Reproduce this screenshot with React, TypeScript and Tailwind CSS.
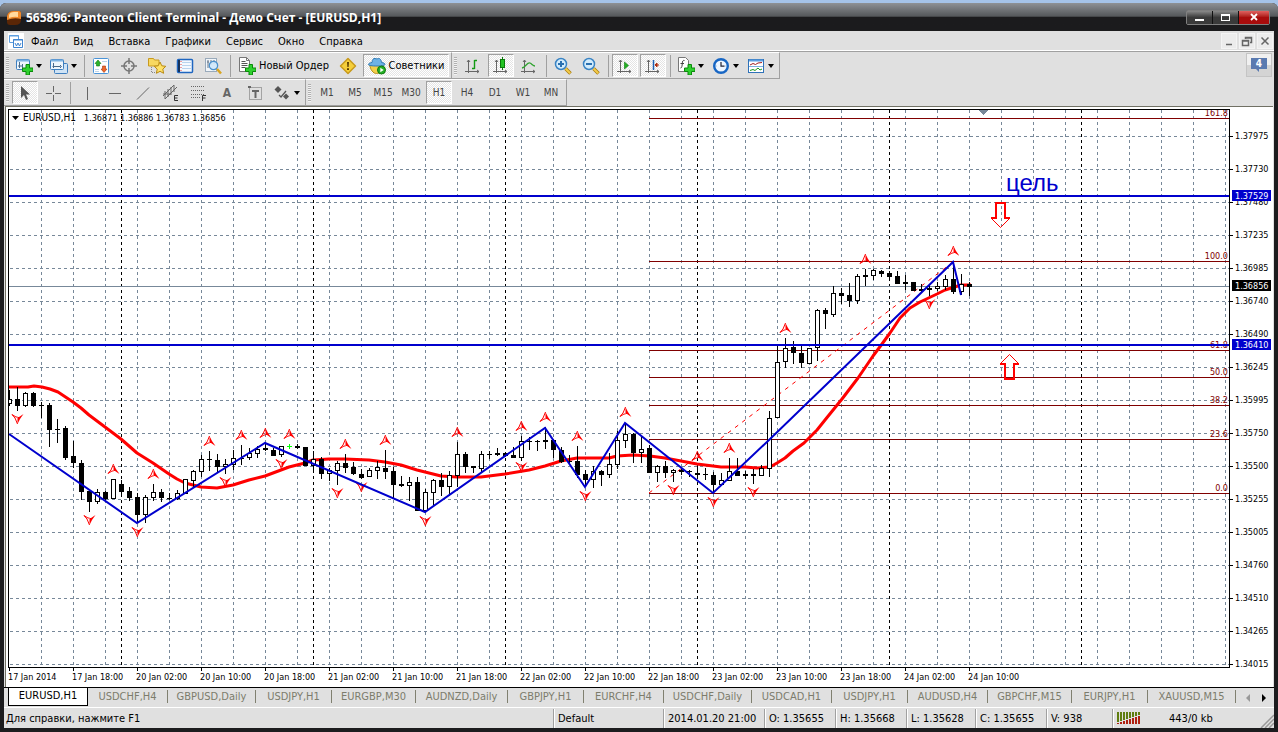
import type { ReactNode } from 'react';
import clsx from 'clsx';

const MENU = ['Файл', 'Вид', 'Вставка', 'Графики', 'Сервис', 'Окно', 'Справка'];
const TIMEFRAMES = ['M1', 'M5', 'M15', 'M30', 'H1', 'H4', 'D1', 'W1', 'MN'];

const TABS = [
  { label: 'EURUSD,H1', width: 'w-20' },
  { label: 'USDCHF,H4', width: 'w-20' },
  { label: 'GBPUSD,Daily', width: 'w-22' },
  { label: 'USDJPY,H1', width: 'w-19' },
  { label: 'EURGBP,M30', width: 'w-21' },
  { label: 'AUDNZD,Daily', width: 'w-23' },
  { label: 'GBPJPY,H1', width: 'w-19' },
  { label: 'EURCHF,H4', width: 'w-20' },
  { label: 'USDCHF,Daily', width: 'w-22' },
  { label: 'USDCAD,H1', width: 'w-20' },
  { label: 'USDJPY,H1', width: 'w-19' },
  { label: 'AUDUSD,H4', width: 'w-20' },
  { label: 'GBPCHF,M15', width: 'w-21' },
  { label: 'EURJPY,H1', width: 'w-19' },
  { label: 'XAUUSD,M15', width: 'w-22' },
];

const STATUS = [
  { text: 'Default', width: 'w-[110px]' },
  { text: '2014.01.20 21:00', width: 'w-[101px]' },
  { text: 'O: 1.35655', width: 'w-[71px]' },
  { text: 'H: 1.35668', width: 'w-[71px]' },
  { text: 'L: 1.35628', width: 'w-[69px]' },
  { text: 'C: 1.35655', width: 'w-[71px]' },
  { text: 'V: 938', width: 'w-[66px]' },
];

// chart geometry
const LEFT = 8;
const RIGHT = 1229;
const TOP = 109;
const BOTTOM = 667;

const PRICES = [
  '1.37975', '1.37730', '1.37480', '1.37235', '1.36985', '1.36740', '1.36490', '1.36245', '1.35995',
  '1.35750', '1.35500', '1.35255', '1.35005', '1.34760', '1.34510', '1.34265', '1.34015',
];

const TIMES = [
  '17 Jan 2014', '17 Jan 18:00', '20 Jan 02:00', '20 Jan 10:00', '20 Jan 18:00', '21 Jan 02:00',
  '21 Jan 10:00', '21 Jan 18:00', '22 Jan 02:00', '22 Jan 10:00', '22 Jan 18:00', '23 Jan 02:00',
  '23 Jan 10:00', '23 Jan 18:00', '24 Jan 02:00', '24 Jan 10:00',
];

const DAY_BREAKS = [121, 313, 505, 697, 889, 1081];

const FIBO: [string, number][] = [
  ['161.8', 118], ['100.0', 261], ['61.8', 350], ['50.0', 377], ['38.2', 405], ['23.6', 439], ['0.0', 493],
];

// [body top, body bottom, wick top, wick bottom, kind], 8px apart
// b = bear, w = bull, d = doji, g = flat bar
type Kind = 'b' | 'w' | 'd' | 'g';
const CANDLES: [number, number, number, number, Kind][] = [
  [399, 404, 390, 406, 'w'], [399, 406, 387, 411, 'b'], [393, 406, 392, 407, 'w'], [393, 406, 392, 407, 'b'],
  [405, 406, 402, 418, 'd'], [405, 430, 403, 447, 'b'], [429, 430, 419, 443, 'd'], [428, 458, 426, 460, 'b'],
  [456, 463, 441, 468, 'b'], [463, 492, 460, 500, 'b'], [491, 502, 491, 512, 'b'], [492, 502, 489, 504, 'w'],
  [492, 499, 491, 501, 'b'], [479, 499, 479, 499, 'w'], [484, 492, 480, 497, 'b'], [491, 498, 487, 501, 'b'],
  [497, 515, 493, 523, 'b'], [497, 515, 495, 523, 'w'], [492, 498, 484, 501, 'w'], [492, 498, 489, 502, 'b'],
  [498, 499, 493, 500, 'd'], [493, 499, 490, 500, 'w'], [479, 494, 479, 494, 'w'], [471, 481, 470, 487, 'w'],
  [459, 472, 455, 477, 'w'], [459, 460, 451, 471, 'd'], [460, 467, 454, 473, 'b'], [464, 467, 459, 474, 'w'],
  [458, 465, 450, 470, 'w'], [458, 459, 445, 465, 'd'], [453, 458, 448, 460, 'w'], [449, 454, 446, 458, 'w'],
  [448, 450, 443, 451, 'd'], [450, 456, 448, 456, 'b'], [446, 455, 446, 457, 'w'], [446, 447, 444, 450, 'g'],
  [446, 448, 444, 449, 'd'], [447, 466, 447, 466, 'b'], [459, 466, 451, 470, 'w'], [459, 474, 457, 479, 'b'],
  [470, 474, 468, 481, 'w'], [463, 471, 461, 485, 'w'], [463, 468, 454, 473, 'b'], [467, 474, 462, 475, 'b'],
  [474, 478, 469, 479, 'b'], [470, 477, 468, 477, 'w'], [467, 471, 461, 479, 'w'], [468, 472, 450, 479, 'b'],
  [471, 485, 467, 499, 'b'], [484, 486, 476, 487, 'd'], [482, 486, 477, 501, 'w'], [482, 511, 477, 511, 'b'],
  [492, 511, 489, 512, 'w'], [480, 493, 479, 505, 'w'], [480, 487, 473, 496, 'b'], [475, 487, 471, 496, 'w'],
  [454, 476, 442, 487, 'w'], [454, 467, 452, 473, 'b'], [466, 468, 466, 473, 'd'], [454, 469, 451, 473, 'w'],
  [454, 455, 451, 459, 'd'], [453, 455, 448, 456, 'd'], [453, 456, 452, 457, 'b'], [455, 458, 447, 458, 'b'],
  [441, 458, 436, 461, 'w'], [441, 442, 437, 450, 'd'], [441, 442, 440, 451, 'd'], [440, 442, 427, 449, 'd'],
  [440, 450, 439, 458, 'b'], [450, 462, 447, 463, 'b'], [461, 462, 455, 463, 'd'], [461, 475, 446, 478, 'b'],
  [474, 480, 470, 486, 'b'], [471, 480, 466, 488, 'w'], [471, 475, 470, 486, 'b'], [464, 475, 453, 478, 'w'],
  [440, 465, 431, 469, 'w'], [434, 441, 423, 448, 'w'], [434, 453, 433, 463, 'b'], [449, 453, 437, 463, 'w'],
  [448, 473, 445, 473, 'b'], [466, 473, 465, 482, 'w'], [466, 473, 461, 478, 'b'], [470, 473, 469, 482, 'w'],
  [470, 472, 467, 475, 'd'], [471, 472, 470, 477, 'd'], [473, 475, 466, 478, 'd'], [474, 475, 468, 480, 'd'],
  [475, 485, 472, 492, 'b'], [480, 485, 473, 485, 'w'], [471, 481, 458, 481, 'w'], [471, 476, 458, 476, 'b'],
  [474, 476, 471, 479, 'd'], [474, 476, 469, 484, 'd'], [468, 476, 465, 476, 'w'], [418, 469, 411, 477, 'w'],
  [362, 418, 345, 418, 'w'], [348, 362, 338, 368, 'w'], [347, 353, 341, 364, 'b'], [353, 363, 346, 368, 'b'],
  [348, 364, 348, 364, 'w'], [310, 348, 309, 361, 'w'], [310, 314, 308, 329, 'b'], [293, 315, 286, 317, 'w'],
  [293, 296, 288, 304, 'b'], [295, 301, 283, 307, 'b'], [276, 301, 274, 304, 'w'], [275, 277, 269, 286, 'd'],
  [270, 276, 269, 280, 'w'], [271, 274, 270, 277, 'b'], [273, 277, 271, 281, 'b'], [276, 284, 271, 284, 'b'],
  [282, 284, 275, 290, 'd'], [282, 291, 282, 291, 'b'], [289, 291, 284, 293, 'd'], [288, 290, 285, 296, 'd'],
  [286, 289, 282, 291, 'w'], [279, 287, 275, 290, 'w'], [279, 292, 262, 294, 'b'], [284, 292, 274, 295, 'w'],
  [284, 287, 282, 296, 'b'],
];

const FRACTALS_UP = [
  [113, 469], [153, 474], [209, 441], [241, 435], [265, 433], [289, 434], [345, 444], [385, 440], [457, 432],
  [521, 426], [545, 417], [577, 436], [625, 412], [697, 456], [729, 448], [785, 328], [865, 259], [953, 251],
];
const FRACTALS_DOWN = [
  [17, 419], [89, 520], [137, 532], [225, 482], [281, 464], [337, 493], [361, 487], [425, 521], [521, 467],
  [585, 496], [673, 490], [713, 502], [753, 492], [929, 304],
];

const ZIGZAG =
  '9,434 137,523 265,443 425,512 545,428 585,487 625,423 713,493 769,440 953,262 961,295';
const MOVING_AVERAGE =
  '9,387 28,387 34,386 42,387 50,389 58,392 73,402 81,408 89,415 105,427 121,439 137,453 153,463 169,474 177,479 185,483 193,485 201,487 217,488 233,485 249,480 265,476 281,470 289,467 305,463 313,460 329,459 345,459 369,460 385,462 401,465 417,470 433,474 441,476 457,477 481,477 505,474 529,470 545,466 561,461 577,458 609,458 617,456 633,455 650,456 665,458 681,461 697,464 721,467 745,467 757,468 770,467 777,463 785,458 793,451 804,443 817,430 825,420 842,399 858,378 873,356 882,344 890,333 900,318 910,308 920,302 937,294 945,290 961,285 971,285';

const range = (from: number, to: number, step: number) =>
  Array.from({ length: Math.floor((to - from) / step) + 1 }, (_, i) => from + i * step);

function Candle({ x, data }: { x: number; data: [number, number, number, number, Kind] }) {
  const [top, bottom, high, low, kind] = data;
  if (kind === 'g') return <path d={`M${x - 2} 446.5h5M${x + 0.5} 444v5`} stroke="#0f0" />;
  return (
    <g>
      <rect x={x} y={high} width="1" height={low - high} />
      {kind === 'w' ? (
        <rect x={x - 1.5} y={top + 0.5} width="4" height={bottom - top - 1} fill="#fff" stroke="#000" />
      ) : (
        <rect x={x - 2} y={top} width="5" height={bottom - top} />
      )}
    </g>
  );
}

function Fractal({ x, y, down }: { x: number; y: number; down?: boolean }) {
  return (
    <g transform={`translate(${x + 0.5} ${y}) scale(1 ${down ? -1 : 1})`}>
      <path d="M0-5 2.500 0 6 5 1.500 2 0 2Z" fill="red" />
      <path d="M0-5-2.500 1-5.500 4.500-1.500 2 0 2" fill="none" stroke="red" />
    </g>
  );
}

function PriceTag({ y, color, text }: { y: number; color: string; text: string }) {
  return (
    <g>
      <rect x="1232" y={y - 5} width="39" height="11" fill={color} />
      <text x="1235" y={y + 4} fill="#fff">{text}</text>
    </g>
  );
}

function Chart() {
  return (
    <svg
      viewBox="6 107 1267 579"
      preserveAspectRatio="xMinYMin meet"
      className="block h-full w-full text-[9px]"
      role="img"
      aria-label="EURUSD,H1"
    >
      <g shapeRendering="crispEdges">
        <g stroke="#778899" strokeDasharray="3 3">
          {range(41, 1225, 32).map((x) => (
            <path key={x} d={`M${x + 0.5} ${TOP + 1}V${BOTTOM}`} />
          ))}
          {range(136, 664, 33).map((y) => (
            <path key={y} d={`M${LEFT + 2} ${y + 0.5}H${RIGHT}`} />
          ))}
        </g>
        <g stroke="#000" strokeDasharray="3 3">
          {DAY_BREAKS.map((x) => (
            <path key={x} d={`M${x + 0.5} ${TOP + 1}V${BOTTOM}`} />
          ))}
        </g>
        <path d={`M${LEFT} 286.5H${RIGHT}`} stroke="#778899" />
        {FIBO.map(([level, y]) => (
          <path key={level} d={`M649 ${y + 0.5}H${RIGHT}`} stroke="#800000" />
        ))}
      </g>
      <path d="M649 493 953 262" stroke="red" strokeDasharray="4 5" />

      <g fill="#800000" textAnchor="end">
        {FIBO.map(([level, y]) => (
          <text key={level} x="1228" y={y - 2}>{level}</text>
        ))}
      </g>

      <polyline points={MOVING_AVERAGE} fill="none" stroke="red" strokeWidth="3" strokeLinejoin="round" />
      <g shapeRendering="crispEdges">
        {CANDLES.map((c, i) => (
          <Candle key={i} x={9 + i * 8} data={c} />
        ))}
      </g>
      {FRACTALS_UP.map(([x, y]) => (
        <Fractal key={`${x}-${y}`} x={x} y={y} />
      ))}
      {FRACTALS_DOWN.map(([x, y]) => (
        <Fractal key={`${x}-${y}`} x={x} y={y} down />
      ))}
      <polyline points={ZIGZAG} fill="none" stroke="#0000cd" strokeWidth="2" />

      <g shapeRendering="crispEdges">
        <path d={`M${LEFT} 196H${RIGHT}M${LEFT} 345H${RIGHT}`} stroke="#0000cd" strokeWidth="2" />
        <path d="M6 107h2v579h-2z" fill="#fff" />
        <path d={`M${LEFT + 0.5} ${BOTTOM}V${TOP + 0.5}H${RIGHT + 0.5}V${BOTTOM + 0.5}H${LEFT}`} fill="none" stroke="#000" />
        <path d={`M978 ${TOP + 1}h11l-5.5 5z`} fill="#778899" />
      </g>
      <g fill="none" stroke="red">
        <path d="M991 218h5v-15h9v15h5" strokeWidth="2" />
        <path d="m991 218 9.500 9.500 9.500-9.500" />
        <path d="M1000 364h5v15h9v-15h5" strokeWidth="2" />
        <path d="m1000 364 9.500-9.500 9.500 9.500" />
      </g>
      <text x="1006" y="191" fill="#0000cd" className="font-['Liberation_Sans',sans-serif] text-[24px]">
        цель
      </text>

      <path d="M12 116h7l-3.500 4z" />
      <text x="23" y="121" className="text-[10px]">EURUSD,H1</text>
      <text x="84" y="121">1.36871 1.36886 1.36783 1.36856</text>

      {PRICES.map((p, i) => (
        <g key={p}>
          <path d={`M${RIGHT + 1} ${136.5 + i * 33}h3`} stroke="#000" />
          <text x="1235" y={139 + i * 33}>{p}</text>
        </g>
      ))}
      <PriceTag y={195} color="#0000cd" text="1.37529" />
      <PriceTag y={285} color="#000" text="1.36856" />
      <PriceTag y={344} color="#0000cd" text="1.36410" />

      {TIMES.map((t, i) => (
        <g key={t}>
          <path d={`M${9.5 + i * 64} ${BOTTOM + 1}v3`} stroke="#000" />
          <text x={8 + i * 64} y="680">{t}</text>
        </g>
      ))}
    </svg>
  );
}

function Icon({ children, size = 18 }: { children: ReactNode; size?: number }) {
  return (
    <svg width={size} height={size} viewBox="0 0 18 18" fill="none" className="shrink-0" aria-hidden="true">
      {children}
    </svg>
  );
}

const Plus = () => (
  <path d="M11 7.500h3.500v3.500h3.500v3.500h-3.500v3.500h-3.500v-3.500h-3.500v-3.500h3.500z" fill="#2fd02f" stroke="#0a8a0a" />
);
const Axes = () => <path d="M4.500 3v13M1 14.500h14M3 5l1.500-2L6 5M13 13l2 1.500-2 1.500" stroke="#666" />;

const NewChartIcon = () => (
  <Icon>
    <rect x="1.500" y="2.500" width="13" height="10" rx="1" fill="#eef6fd" stroke="#3f7fbf" />
    <path d="M2 3.500h12" stroke="#7db3e3" strokeWidth="2" />
    <path d="M4.500 5v6M3 9h5M7.500 7v4" stroke="#4a6a8a" />
    <Plus />
  </Icon>
);
const ProfilesIcon = () => (
  <Icon>
    <rect x="4.500" y="6.500" width="13" height="10" rx="1" fill="#cfe3f5" stroke="#3f7fbf" />
    <rect x="0.500" y="2.500" width="13" height="10" rx="1" fill="#eef6fd" stroke="#3f7fbf" />
    <path d="M1 3.500h12" stroke="#7db3e3" strokeWidth="2" />
    <path d="M3.500 6v5M2.500 9.500h8M10 8l1.500 1.500L10 11" stroke="#4a6a8a" />
  </Icon>
);
const MarketWatchIcon = () => (
  <Icon>
    <rect x="1.500" y="1.500" width="15" height="15" rx="1" fill="#fff" stroke="#4a94d8" />
    <path d="M6 3 9 6.500H7.500V9h-3V6.500H3z" fill="#2bb32b" stroke="#117a11" strokeWidth="0.600" />
    <path d="M12 15.500 9 12h1.500V9h3v3H15z" fill="#f0672a" stroke="#a33a10" strokeWidth="0.600" />
    <path d="M10 4.500h5M3 12.500h4M3 14.500h4" stroke="#bcd4ea" />
  </Icon>
);
const TargetIcon = () => (
  <Icon>
    <circle cx="9" cy="9" r="5" stroke="#777" strokeWidth="1.500" />
    <path d="M9 1v6M9 11v6M1 9h6M11 9h6" stroke="#777" strokeWidth="1.500" />
  </Icon>
);
const FavoritesIcon = () => (
  <Icon>
    <path d="M.5 3V1.500h5l1 1.500H11v6H.5z" fill="#f8d860" stroke="#c89a20" />
    <path d="M3.500 10v6M4 15.500h3" stroke="#888" strokeDasharray="1 1" />
    <path d="m12 5 1.800 3.800 4 .5-3 2.800.8 4.200L12 14.300l-3.600 2 .8-4.200-3-2.800 4-.5z" fill="#ffe26a" stroke="#b98a12" />
  </Icon>
);
const NavigatorIcon = () => (
  <Icon>
    <rect x="1.500" y="2.500" width="15" height="13" rx="1" fill="#f4f9fe" stroke="#1f66c0" strokeWidth="1.500" />
    <path d="M3 3v12" stroke="#16335c" strokeWidth="2" />
    <path d="M6 5.500h9M6 8.500h9M6 11.500h9" stroke="#b8d4ee" />
    <path d="M5 4v10" stroke="#d44" strokeDasharray="1 2" />
  </Icon>
);
const TesterIcon = () => (
  <Icon>
    <rect x="1.500" y="1.500" width="11" height="13" fill="#f2f6fa" stroke="#9ab" />
    <path d="M4 3v8M7 3v5M10 3v4M3 5h2M6 6h2" stroke="#678" />
    <circle cx="9.500" cy="8.500" r="4.200" fill="#cfe8fb" fillOpacity="0.900" stroke="#4a90cc" strokeWidth="1.200" />
    <path d="m13 12 4 4.500" stroke="#d9a520" strokeWidth="2.500" />
  </Icon>
);
const NewOrderIcon = () => (
  <Icon>
    <path d="M1.500.5h7l3 3v11h-10z" fill="#fff" stroke="#777" />
    <path d="M8.500.5v3h3" stroke="#777" />
    <path d="M3.500 4.500h4M3.500 6.500h6M3.500 8.500h6M3.500 10.500h4" stroke="#555" />
    <Plus />
  </Icon>
);
const WarningIcon = () => (
  <Icon>
    <path d="m9 1.500 7.500 7.500L9 16.500 1.500 9z" fill="#f5cf3a" stroke="#c89a1c" strokeLinejoin="round" strokeWidth="1.500" />
    <path d="M8 5h2l-.4 5H8.400zM8 11.200h2V13H8z" fill="#5a3d00" />
  </Icon>
);
// yellow face under a blue hat, with the green "running" badge
const AdvisorsIcon = () => (
  <Icon>
    <path d="M1.500 7c1 6 3.500 9.500 7 9.500s6.500-3 7-9.500z" fill="#f3cf4a" stroke="#b98f1c" />
    <path d="M4 5.500C4.300 2.500 5.500 1 7 1.500c1.300.5 2.500.3 3.500 0 1.600-.4 2.700 1.500 3 4 2.400.3 3.500 1 3.500 1.800 0 1-3 1.700-8 1.700S.5 8.500.5 7.500c0-.9 1.200-1.700 3.500-2z" fill="#6db2e6" stroke="#2f7ab5" />
    <circle cx="13.500" cy="13" r="4" fill="#25b025" stroke="#0d7a0d" />
    <path d="m12.300 10.800 3.400 2.200-3.400 2.200z" fill="#fff" />
  </Icon>
);
const BarsIcon = () => (
  <Icon>
    <Axes />
    <path d="M10.500 3v9M10.500 3.500H13M8 11.500h2.500" stroke="#129a12" strokeWidth="1.400" />
  </Icon>
);
const CandlesIcon = () => (
  <Icon>
    <Axes />
    <path d="M10.500 0v13" stroke="#0a7a0a" />
    <rect x="8.500" y="2.500" width="4" height="8" fill="#22c322" stroke="#0a7a0a" />
  </Icon>
);
const LineIcon = () => (
  <Icon>
    <Axes />
    <path d="M2 11c4-1 5-6 8-5 2 1 3 3 5 3" stroke="#2fa32f" strokeWidth="1.300" />
  </Icon>
);
const ZoomIcon = ({ plus }: { plus?: boolean }) => (
  <Icon>
    <path d="m11.500 11.500 5 5" stroke="#a87c10" strokeWidth="3.500" />
    <path d="m11.500 11.500 4.700 4.700" stroke="#f4cc4a" strokeWidth="2" />
    <circle cx="7" cy="7" r="5.500" fill="#d3ecfc" stroke="#3a84c4" strokeWidth="1.500" />
    <path d={plus ? 'M4 7h6M7 4v6' : 'M4 7h6'} stroke="#2a70b0" strokeWidth="2" />
  </Icon>
);
const AutoScrollIcon = () => (
  <Icon>
    <Axes />
    <path d="m8.500 5 4 3.500-4 3.500z" fill="#22b022" stroke="#0a7a0a" strokeWidth="0.600" />
  </Icon>
);
const ShiftIcon = () => (
  <Icon>
    <Axes />
    <path d="M9.500 3v10" stroke="#1d62b5" strokeWidth="1.500" />
    <path d="M15 8h-3M13 6l-2 2 2 2z" fill="#b03010" stroke="#b03010" />
  </Icon>
);
const IndicatorsIcon = () => (
  <Icon>
    <path d="M1.500.5h7l3 3v11h-10z" fill="#fff" stroke="#777" />
    <path d="M7.500 3.500c-2-.5-2 1-2.200 3S5 11 3.500 11M3.500 6.500H7" stroke="#444" />
    <Plus />
  </Icon>
);
const ClockIcon = () => (
  <Icon>
    <circle cx="9" cy="9" r="6.800" fill="#eef6ff" stroke="#1766c4" strokeWidth="2.400" />
    <path d="M9 5v4.200h3.500" stroke="#223" strokeWidth="1.200" />
    <path d="M9 3v1M9 14v1M3.500 9h1M13.500 9h1" stroke="#69c" />
  </Icon>
);
const TemplateIcon = () => (
  <Icon>
    <rect x="1.500" y="2.500" width="15" height="13" fill="#fff" stroke="#2f72b8" />
    <path d="M2 3.500h14" stroke="#5c9fe0" strokeWidth="2" />
    <path d="m3 8 3-1.500 2.500 1L11 6l4-.5" stroke="#a02020" />
    <path d="M2 9.500h14" stroke="#7ab0e0" />
    <path d="m3 13.500 3-1 2 1 3-2.500 2 2 2-1" stroke="#1a9a1a" />
  </Icon>
);
const CursorIcon = () => (
  <Icon>
    <path d="M5 2v12l3-3 2 5 2-1-2-4.500h4z" fill="#555" />
  </Icon>
);
const DrawIcon = ({ d }: { d: string }) => (
  <Icon>
    <path d={d} stroke="#666" />
  </Icon>
);
const ChannelIcon = () => (
  <Icon>
    <path d="M1 12 12 1M3 15l12-12M3 7v8M6 5v8M9 3v8M12 1v7M1 10h8" stroke="#666" />
    <path d="M16 11.500h-3.500v5H16M12.500 14h3" stroke="#333" />
  </Icon>
);
const FiboIcon = () => (
  <Icon>
    <path d="M1 2.500h14M1 6.500h14M1 10.500h14M1 13.500h9" stroke="#666" strokeDasharray="1 1" />
    <path d="M12.500 17v-5.500H16M12.500 14h3" stroke="#333" />
  </Icon>
);
const TextLabelIcon = () => (
  <Icon>
    <rect x="3.500" y="3.500" width="12" height="12" stroke="#666" strokeDasharray="1 1" />
    <path d="M2 2h3v2H2z" fill="#666" />
    <path d="M6 7h7M9.500 7v7" stroke="#666" strokeWidth="2" />
  </Icon>
);
const ArrowsIcon = () => (
  <Icon>
    <path d="m5 2 3.500 3.500L5 9 1.500 5.500z" fill="#555" />
    <path d="m13 9.500 3 3-3 3-3-3z" fill="#555" />
    <path d="m6 11 2 2 5-6" stroke="#555" strokeWidth="1.300" />
  </Icon>
);

const Caret = () => <span className="border-x-3 border-t-4 border-x-transparent border-t-black" />;
const Gripper = () => (
  <span className="mr-px h-[18px] w-[3px] bg-[repeating-linear-gradient(#b0b0b0_0_1px,#f2f2f2_1px_2px)]" />
);
const Sep = () => (
  <span className="flex h-[22px] w-1 justify-center">
    <span className="w-px bg-[#a0a0a0]" />
  </span>
);

type ToolProps = { label: string; children: ReactNode; pressed?: boolean; menu?: boolean; wide?: string };

function Tool({ label, children, pressed, menu, wide }: ToolProps) {
  return (
    <button
      type="button"
      aria-label={label}
      aria-pressed={pressed}
      className={clsx(
        'flex h-[23px] shrink-0 items-center justify-center gap-[3px] border',
        wide ?? (menu ? 'w-[33px]' : 'w-[26px]'),
        pressed
          ? 'border-t-[#a0a0a0] border-r-white border-b-white border-l-[#a0a0a0] bg-[repeating-conic-gradient(#fff_0_25%,#e4e4e4_0_50%)] bg-[length:2px_2px]'
          : 'border-transparent',
      )}
    >
      {children}
      {menu && <Caret />}
    </button>
  );
}

function Panel({ label, children }: { label: string; children: ReactNode }) {
  return (
    <div
      role="toolbar"
      aria-label={label}
      className="flex items-center gap-[2px] border-r border-b border-t border-t-white border-r-[#a0a0a0] border-b-[#a0a0a0] pl-[2px] pr-[2px]"
    >
      <Gripper />
      {children}
    </div>
  );
}

function TitleBar() {
  return (
    <header className="flex h-7 shrink-0 items-center rounded-t-md border-t border-[#8c8f93] bg-linear-to-b from-[#8a8d91] via-[#55585b] via-45% to-[#1b1b1d] to-50% pr-2 pl-[6px]">
      <svg width="16" height="16" viewBox="0 0 16 16" aria-hidden="true">
        <path d="M1 6q1-5 7-5h5q2 0 2 2v7q0 5-6 5H4q-3 0-3-3z" fill="#5a2606" />
        <path d="M1 6q1-5 7-5h5q2 0 2 2v6Q8 7 1 10z" fill="#f08a2c" />
        <path d="M3 5q1-3 5-3h4v5Q8 6 3 8z" fill="#ffd9a0" />
      </svg>
      <h1 className="ml-1 grow font-['Open_Sans',sans-serif] text-[12px] leading-4 font-bold text-white">
        565896: Panteon Client Terminal - Демо Счет - [EURUSD,H1]
      </h1>
      <div className="mb-px flex rounded-xs border border-[#808080] bg-[#111]">
        <button type="button" aria-label="Свернуть" className="flex h-[13px] w-[26px] items-end justify-center border-r border-[#111] bg-linear-to-b from-[#8a8a8a] to-[#3a3a3a] to-50% pb-[3px]">
          <span className="h-[2px] w-[9px] bg-white" />
        </button>
        <button type="button" aria-label="Развернуть" className="flex h-[13px] w-[26px] items-center justify-center border-r border-[#111] bg-linear-to-b from-[#8a8a8a] to-[#3a3a3a] to-50%">
          <span className="h-[7px] w-[9px] border border-t-2 border-white" />
        </button>
        <button type="button" aria-label="Закрыть" className="flex h-[13px] w-[30px] items-center justify-center bg-linear-to-b from-[#e06060] to-[#a80c0c] to-50%">
          <svg width="8" height="8" viewBox="0 0 8 8" aria-hidden="true">
            <path d="m1 1 6 6M7 1 1 7" stroke="#fff" strokeWidth="1.800" />
          </svg>
        </button>
      </div>
    </header>
  );
}

function MenuBar() {
  const mdi = [
    { label: 'Свернуть окно', d: 'M3 9.500h6' },
    { label: 'Восстановить окно', d: 'M1.500 5.500h6v5h-6zM1 6h7M4.500 4V2.500h6v5H9M4 3h7' },
    { label: 'Закрыть окно', d: 'm2.500 2.500 7 7M9.500 2.500l-7 7' },
  ];
  return (
    <nav className="flex h-[21px] shrink-0 items-center border-b border-[#a0a0a0] pl-1 shadow-[inset_0_-1px_#fff]">
      <svg width="16" height="16" viewBox="0 0 16 16" fill="none" className="bg-white" aria-hidden="true">
        <path d="M1.500 2.500h9v7h-9zM1 3h10" stroke="#5f9fe0" />
        <path d="M5.500 6.500h9v8h-9zM5 7h10" fill="#fff" stroke="#3f85d0" />
        <path d="m7 10 1.500 3 1.500-3 1.500 3 1.500-3" stroke="#3f85d0" />
      </svg>
      <div className="flex gap-px pt-px">
        {MENU.map((item) => (
          <a key={item} href="#" className="px-[7px] text-black">
            {item}
          </a>
        ))}
      </div>
      <div className="ml-auto flex gap-[2px] pr-px">
        {mdi.map((b) => (
          <button key={b.label} type="button" aria-label={b.label} className="flex h-4 w-4 items-center justify-center border border-[#f4f4f4] bg-[#ececec]">
            <svg width="12" height="12" viewBox="0 0 12 12" fill="none" aria-hidden="true">
              <path d={b.d} stroke="#666" strokeWidth="1.500" />
            </svg>
          </button>
        ))}
      </div>
    </nav>
  );
}

export default function App() {
  return (
    <div className="flex h-screen flex-col bg-[#a5c3e8] pt-[3px] font-['DejaVu_Sans_Condensed',sans-serif] text-[11px] leading-[14px] text-black">
      <div className="flex min-h-0 grow flex-col rounded-t-md bg-[#1c1c1e]">
        <TitleBar />
        <div className="mx-1 mb-1 flex min-h-0 grow flex-col bg-[#e0e0e0]">
          <MenuBar />

          <div className="flex h-[27px] shrink-0">
            <Panel label="Стандартная">
              <Tool label="Новый график" menu><NewChartIcon /></Tool>
              <Tool label="Профили" menu><ProfilesIcon /></Tool>
              <Sep />
              <Tool label="Обзор рынка"><MarketWatchIcon /></Tool>
              <Tool label="Окно данных"><TargetIcon /></Tool>
              <Tool label="Навигатор"><FavoritesIcon /></Tool>
              <Tool label="Терминал"><NavigatorIcon /></Tool>
              <Tool label="Тестер стратегий"><TesterIcon /></Tool>
              <Sep />
              <Tool label="Новый Ордер" wide="w-[99px]"><NewOrderIcon />Новый Ордер</Tool>
              <Tool label="Предупреждение"><WarningIcon /></Tool>
              <Tool label="Советники" wide="w-[86px]" pressed><AdvisorsIcon />Советники</Tool>
            </Panel>
            <Panel label="Графики">
              <Tool label="Бары"><BarsIcon /></Tool>
              <Tool label="Свечи" pressed><CandlesIcon /></Tool>
              <Tool label="Линия"><LineIcon /></Tool>
              <Sep />
              <Tool label="Увеличить"><ZoomIcon plus /></Tool>
              <Tool label="Уменьшить"><ZoomIcon /></Tool>
              <Sep />
              <Tool label="Автопрокрутка" pressed><AutoScrollIcon /></Tool>
              <Tool label="Сдвиг графика" pressed><ShiftIcon /></Tool>
              <Sep />
              <Tool label="Индикаторы" menu><IndicatorsIcon /></Tool>
              <Tool label="Периоды" menu><ClockIcon /></Tool>
              <Tool label="Шаблоны" menu><TemplateIcon /></Tool>
            </Panel>
            <button type="button" aria-label="Сообщения: 4" className="mt-px mr-[2px] ml-auto flex h-6 w-[26px] items-center justify-center border border-[#c4c4c4] bg-linear-to-b from-[#f0f0f0] from-50% to-[#d4d4d4] to-50%">
              <svg width="18" height="18" viewBox="0 0 18 18" aria-hidden="true">
                <path d="M1 2h16v11H9v3l-3-3H1z" fill="#5a7ab0" />
                <text x="9" y="11" textAnchor="middle" fill="#fff" className="text-[10px] font-bold">4</text>
              </svg>
            </button>
          </div>

          <div className="flex h-[27px] shrink-0">
            <Panel label="Инструменты">
              <Tool label="Курсор" pressed><CursorIcon /></Tool>
              <Tool label="Перекрестие"><DrawIcon d="M9.500 2v6M9.500 11v6M2 9.500h6M11 9.500h6" /></Tool>
              <Sep />
              <Tool label="Вертикальная линия"><DrawIcon d="M9.500 3v13" /></Tool>
              <Tool label="Горизонтальная линия"><DrawIcon d="M3 9.500h12" /></Tool>
              <Tool label="Трендовая линия"><DrawIcon d="M3 15.500 15 3.500" /></Tool>
              <Tool label="Канал"><ChannelIcon /></Tool>
              <Tool label="Линии Фибоначчи"><FiboIcon /></Tool>
              <Tool label="Текст"><span className="text-xs font-bold text-[#666]">A</span></Tool>
              <Tool label="Текстовая метка"><TextLabelIcon /></Tool>
              <Tool label="Стрелки" menu><ArrowsIcon /></Tool>
            </Panel>
            <Panel label="Период">
              {TIMEFRAMES.map((tf) => (
                <Tool key={tf} label={tf} pressed={tf === 'H1'}>
                  <span className="text-[10px] text-[#444]">{tf}</span>
                </Tool>
              ))}
            </Panel>
          </div>

          <main className="ml-px mr-px min-h-0 grow border-t border-l border-[#707064] bg-white">
            <Chart />
          </main>

          <div className="flex h-[21px] shrink-0 border-t border-b border-t-black border-b-white pl-1">
            {TABS.map((tab, i) => (
              <button
                key={i}
                type="button"
                className={clsx('flex shrink-0', tab.width, i === 0 && 'mb-px border-r border-b border-l border-black bg-white')}
              >
                <span
                  className={clsx(
                    'flex grow items-center justify-center',
                    i === 0 ? 'h-4' : 'mt-[2px] h-[13px] border-r border-[#808070] text-[#7c7c6c]',
                  )}
                >
                  {tab.label}
                </span>
              </button>
            ))}
            <div className="ml-auto flex items-center gap-3 pr-2">
              <button type="button" aria-label="Назад" className="border-y-4 border-r-4 border-y-transparent border-r-[#999]" />
              <button type="button" aria-label="Вперед" className="border-y-4 border-l-4 border-y-transparent border-l-black" />
            </div>
          </div>

          <footer className="flex h-5 shrink-0 items-stretch pt-px">
            <span className="grow self-center pl-[2px]">Для справки, нажмите F1</span>
            {STATUS.map((s) => (
              <span key={s.text} className={clsx('flex shrink-0 items-center border-l border-[#a0a0a0] pl-1 shadow-[inset_1px_0_#fff]', s.width)}>
                {s.text}
              </span>
            ))}
            <span className="flex w-[162px] shrink-0 items-center border-l border-[#a0a0a0] pl-1 shadow-[inset_1px_0_#fff]">
              <svg width="24" height="13" viewBox="0 0 24 13" aria-hidden="true">
                {range(0, 7, 1).map((i) => (
                  <g key={i}>
                    <rect x={i * 3} y="0" width="2" height={10 - i} fill="#5f7d10" />
                    <rect x={i * 3} y={11 - i} width="2" height={i + 1} fill="#b02010" />
                  </g>
                ))}
              </svg>
              <span className="ml-7">443/0 kb</span>
              <svg width="14" height="14" viewBox="0 0 14 14" className="ml-auto self-end" aria-hidden="true">
                <path d="M1 14 14 1M5 14l9-9M9 14l5-5" stroke="#999" strokeWidth="1.500" />
              </svg>
            </span>
          </footer>
        </div>
      </div>
    </div>
  );
}
